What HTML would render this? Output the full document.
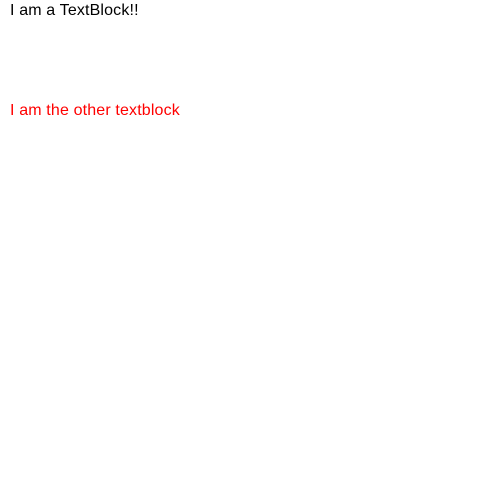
<!DOCTYPE html>
<html><head><style>
html,body{margin:0;padding:0;background:#fff;width:500px;height:500px;overflow:hidden}
div{position:absolute;left:10px;font-family:"Liberation Sans",sans-serif;font-size:16px;letter-spacing:0.15px;white-space:nowrap}
</style></head><body>
<div style="top:2px;color:#000">I am a TextBlock!!</div>
<div style="top:102px;color:#f00">I am the other textblock</div>
</body></html>
